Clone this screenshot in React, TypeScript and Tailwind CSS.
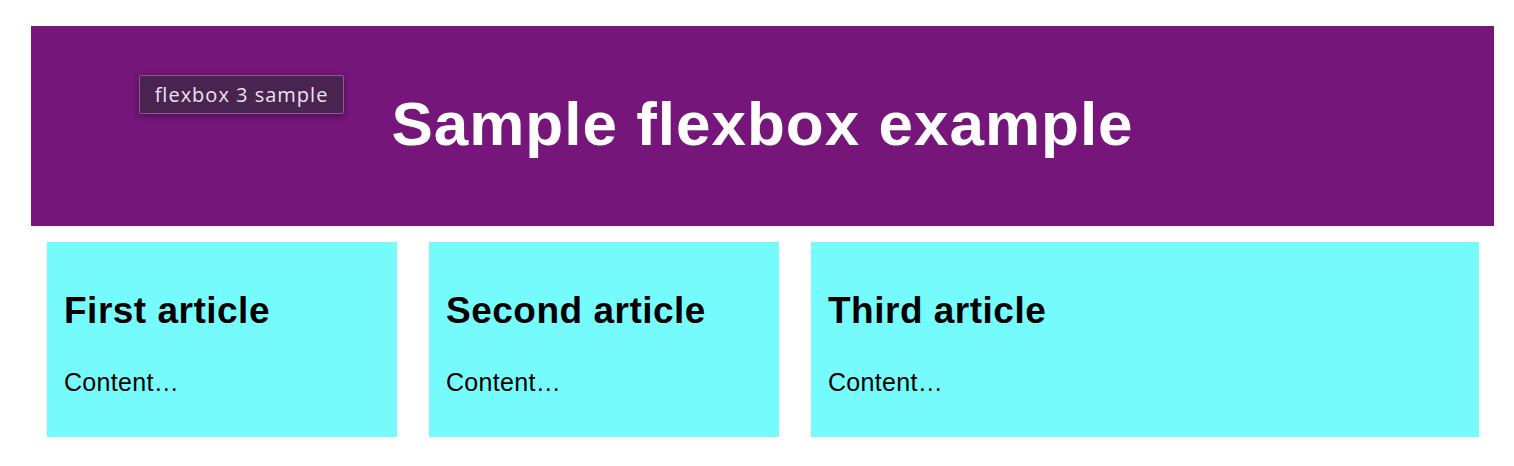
export default function App() {
  const articles = [
    { title: "First article", cls: "w-[350px]" },
    { title: "Second article", cls: "w-[350px]" },
    { title: "Third article", cls: "flex-1" },
  ];
  return (
    <div className="bg-white min-h-[466px] pt-[26px] px-[20px] font-['Liberation_Sans',Arial,sans-serif] text-black">
      <header className="relative bg-[#76157a] h-[200px] ml-[11px] mr-0 w-[1463px] pt-[62px]">
        <h1 className="text-center text-white font-bold text-[62px] leading-[71px] tracking-[1px]">
          Sample flexbox example
        </h1>
        <div className="absolute left-[108px] top-[49px] h-[39px] w-[205px] bg-[#4a2450] border border-[#8a5a8f] rounded-[2px] shadow-[0_2px_6px_rgba(0,0,0,0.35)] flex items-center justify-center text-[#ece3ee] text-[20px] tracking-[1px] font-['Open_Sans',sans-serif]">
          flexbox 3 sample
        </div>
      </header>
      <section className="flex gap-[32px] ml-[27px] mr-[15px] mt-[16px]">
        {articles.map((a) => (
          <article key={a.title} className={`${a.cls} bg-[#76fbfd] h-[195px] px-[17px] pt-[48px]`}>
            <h2 className="font-bold text-[37px] leading-[42px] tracking-[0.5px]">{a.title}</h2>
            <p className="mt-[36px] text-[25px] leading-[29px] tracking-[0.3px]">Content…</p>
          </article>
        ))}
      </section>
    </div>
  );
}
